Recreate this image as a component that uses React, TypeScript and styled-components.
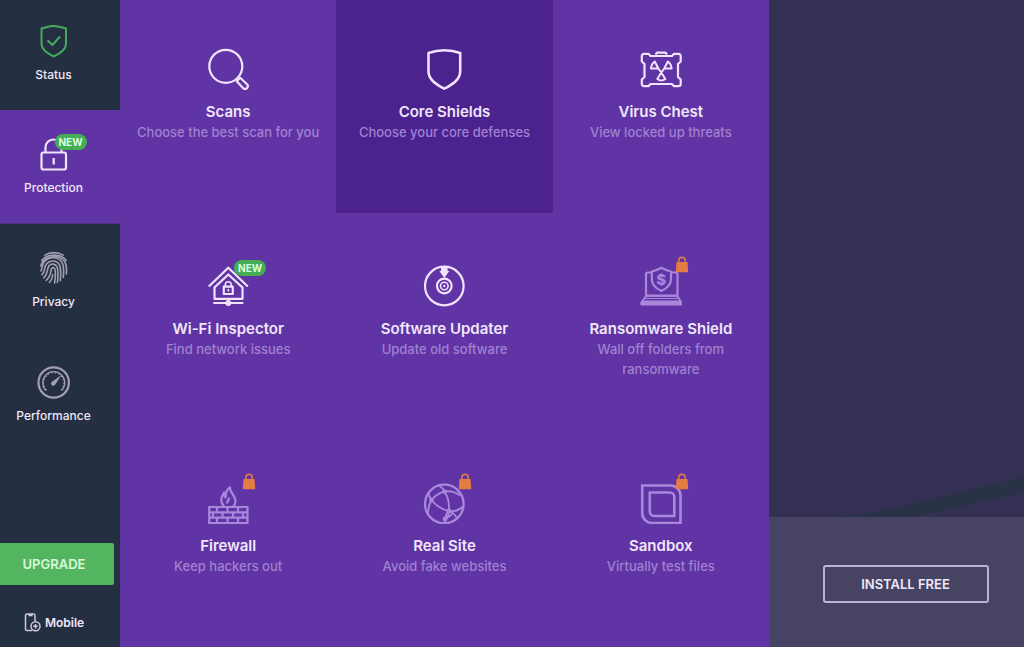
import React from "react";
import styled, { createGlobalStyle } from "styled-components";

const GlobalStyle = createGlobalStyle`
  * { box-sizing: border-box; }
  body {
    margin: 0;
    background: #243041;
    color: #f0e6fa;
    font-family: Inter, "Open Sans", sans-serif;
  }
  a { color: inherit; text-decoration: none; }
  svg { display: block; }
`;

const Shell = styled.div`
  display: grid;
  grid-template-columns: 120px minmax(0, 649fr) minmax(0, 255fr);
  min-height: 100vh;
`;

const Sidebar = styled.nav`
  display: flex;
  flex-direction: column;
  background: #243041;
`;

const NavItem = styled.a<{ $active?: boolean }>`
  display: flex;
  flex-direction: column;
  align-items: center;
  gap: 8px;
  height: 114px;
  padding: 27px 13px 0 0;
  border-bottom: 1px solid ${(p) => (p.$active ? "#4a2f80" : "#212c3c")};
  background: ${(p) => (p.$active ? "#6034a4" : "transparent")};
  font-size: 12px;
  font-weight: 500;
  line-height: 18px;

  &:first-child {
    height: 110px;
    padding-top: 24px;
  }
`;

const NavIcon = styled.span<{ $color: string }>`
  position: relative;
  display: grid;
  place-items: center;
  width: 34px;
  height: 34px;
  color: ${(p) => p.$color};
`;

const SidebarFooter = styled.div`
  display: flex;
  flex-direction: column;
  gap: 13px;
  margin-top: auto;
`;

const UpgradeButton = styled.button`
  width: 114px;
  height: 42px;
  padding: 0 6px 0 0;
  border: 0;
  border-radius: 0 2px 2px 0;
  background: #53b560;
  color: #d8fbdc;
  font: inherit;
  font-size: 13px;
  font-weight: 600;
`;

const MobileLink = styled.a`
  display: flex;
  align-items: center;
  justify-content: center;
  gap: 4px;
  height: 49px;
  padding-right: 12px;
  font-size: 12px;
  font-weight: 600;
`;

const NewBadge = styled.span<{ $x: number; $y: number }>`
  position: absolute;
  left: ${(p) => p.$x}px;
  top: ${(p) => p.$y}px;
  width: 32px;
  height: 16px;
  border-radius: 8px;
  background: #43ae54;
  color: #dcffe0;
  font-size: 10px;
  font-weight: 700;
  line-height: 16px;
  text-align: center;
`;

const LockBadge = styled.span`
  position: absolute;
  left: 35px;
  top: -9px;
`;

const Tools = styled.main`
  display: grid;
  grid-template-columns: repeat(3, minmax(0, 1fr));
  grid-template-rows: repeat(3, minmax(180px, 1fr));
  row-gap: 4px;
  background: #6034a4;
`;

const Tile = styled.a<{ $selected?: boolean }>`
  display: flex;
  flex-direction: column;
  align-items: center;
  padding: 48px 8px 0;
  background: ${(p) => (p.$selected ? "#4c228f" : "transparent")};
  text-align: center;
`;

const TileIcon = styled.span<{ $locked?: boolean }>`
  position: relative;
  width: 42px;
  height: 42px;
  color: ${(p) => (p.$locked ? "#a987db" : "#f0e3fb")};
`;

const TileTitle = styled.strong`
  margin-top: 11px;
  font-size: 15px;
  font-weight: 600;
  line-height: 21px;
`;

const TileText = styled.span<{ $narrow?: boolean }>`
  max-width: ${(p) => (p.$narrow ? "150px" : "none")};
  color: #a081d2;
  font-size: 13px;
  font-weight: 500;
  line-height: 20px;
`;

const Aside = styled.aside`
  display: flex;
  flex-direction: column;
  background: #343053;
`;

const Backdrop = styled.div`
  display: flex;
  flex: 1;
  align-items: flex-end;

  svg { width: 100%; height: 48px; }
`;

const InstallPanel = styled.div`
  display: flex;
  align-items: center;
  justify-content: center;
  height: 130px;
  padding: 4px 0 0 18px;
  background: #464363;
`;

const InstallButton = styled.button`
  width: 166px;
  height: 38px;
  border: 2px solid #bdb2d2;
  border-radius: 3px;
  background: transparent;
  color: #f0e6fa;
  font: inherit;
  font-size: 13px;
  font-weight: 600;
`;

const Drawing = ({ size = 42, children }: { size?: number; children: React.ReactNode }) => (
  <svg
    width={size}
    height={size}
    viewBox={`0 0 ${size} ${size}`}
    fill="none"
    stroke="currentColor"
    strokeWidth="2.2"
    strokeLinejoin="round"
    aria-hidden="true"
  >
    {children}
  </svg>
);

const StatusIcon = () => (
  <Drawing size={34}>
    <path d="M4.500 4.500C9 3.500 12 2 16.700 2s8 1.500 12.300 2.500V20c0 6-6 9.500-12.300 12.500C10.500 29.500 4.500 26 4.500 20z" strokeWidth="2" />
    <path d="M10.500 16.500l5 4.500 7.500-8.500" strokeWidth="2" />
  </Drawing>
);

const PadlockIcon = () => (
  <Drawing size={34}>
    <rect x="4.500" y="15.500" width="24.500" height="17" rx="2" />
    <path d="M8.500 15V10.500a8 8 0 0 1 16 0V15M16.700 21v6.500" />
  </Drawing>
);

const FingerprintIcon = () => (
  <Drawing size={34}>
    <g strokeWidth="1.600" strokeLinecap="round">
      <path d="M8 4.200C13 .8 21 .8 26 4.200" />
      <path d="M4.800 9.500C10 2.300 24 2.300 29.200 9.500" />
      <path d="M3.800 15C6.500 3.800 24 2.500 28.300 12c1.500 3.500 1.500 7.500 1 11" />
      <path d="M4 20c1.500-3 .5-6 3.500-9.500 5-5.800 15-4.800 18 2 1.600 4 1.300 9 .8 14" />
      <path d="M5 23.800c3.500-3.500 1.500-7 4.700-11 3.800-4.500 11-3.500 13 1.800 1.800 5 1 10 .6 15" />
      <path d="M6.800 26.800c5-4.500 2.600-8.500 5.200-12 2.500-3 7-2 8.200 1.500 1.500 4.800.8 10 .2 15" />
      <path d="M9.200 29.300c5.800-5 3.800-9.300 5.500-11.800 1.200-1.500 2.800-.8 3.200.8 1.200 4.500.3 9-.3 13.700" />
      <path d="M12.500 31.500c2-2.300 3-5 3.300-8" />
    </g>
  </Drawing>
);

const GaugeIcon = () => (
  <Drawing size={34}>
    <circle cx="16.700" cy="17.500" r="15.200" />
    <path d="M9 25.500a11 11 0 1 1 15.500 0" strokeWidth="1.300" />
    <path d="M9.500 25a10.200 10.200 0 1 1 14.500 0" strokeWidth="1.500" strokeDasharray="1 2.600" />
    <path d="M23.500 11L18 19.500a2 2 0 1 1-2.600-2.800z" fill="currentColor" strokeWidth=".5" />
  </Drawing>
);

const MobileIcon = () => (
  <svg width="17" height="19" viewBox="0 0 17 19" fill="none" stroke="#cfc6dc" strokeWidth="1.500" aria-hidden="true">
    <path d="M8 17.500H3A1.500 1.500 0 0 1 1.500 16V2.500A1.500 1.500 0 0 1 3 1h6.500A1.500 1.500 0 0 1 11 2.500V8M4.500 2.500h4" />
    <circle cx="11.500" cy="13.300" r="4.500" />
    <path d="M11.500 11v4.600M9.200 13.300h4.600" />
  </svg>
);

const OrangeLock = () => (
  <svg width="14" height="17" viewBox="0 0 14 17" fill="none" role="img" aria-label="Locked">
    <path d="M3.800 7V4.600a3.200 3.200 0 0 1 6.400 0V7" stroke="#dd7b48" strokeWidth="1.600" />
    <path d="M1.500 6h11l.7 9.300a.8.800 0 0 1-.8.900H1.600a.8.800 0 0 1-.8-.9z" fill="#e27c42" />
  </svg>
);

const ScanIcon = () => (
  <Drawing>
    <circle cx="18.800" cy="18.300" r="16.500" />
    <path d="M29.800 33.200l6.200 6.800a2.700 2.700 0 0 0 4-3.700l-6.800-6.500z" />
  </Drawing>
);

const ShieldIcon = () => (
  <Drawing>
    <path d="M5.500 5C11 3 16 2.200 21.300 2.200S32 3 37.200 5v18.500c0 8-7.500 12.800-15.900 17.200C13 36.300 5.500 31.500 5.500 23.500z" strokeWidth="2.600" />
  </Drawing>
);

const ChestIcon = () => (
  <Drawing>
    <path d="M15.500 6.500l1.500-1.800h8.600L27 6.500M10.500 8h21.500l2-2.200h4.500a2.200 2.200 0 0 1 2.200 2.200v5.500L38 16v13l2.700 2.500V36a2.200 2.200 0 0 1-2.200 2.200H34L32 36H10.500l-2 2.200H4A2.200 2.200 0 0 1 1.800 36v-4.500L4.500 29V16l-2.700-2.500V8A2.200 2.200 0 0 1 4 5.800h4.500z" />
    <path d="M14.800 13.500q-3.500 2.500-3.800 7h7.300zM27.800 13.500q3.500 2.500 3.800 7h-7.300zM21.300 24.500l-4 6.500q4 2.800 8 0zM18.300 20.500l3 4 3-4" strokeWidth="2" />
  </Drawing>
);

const HouseIcon = () => (
  <Drawing>
    <path d="M1.800 21.500L21.300 2.700l19.500 18.800" />
    <path d="M7.500 22.500v11.300h28V22.500L21.300 9.500z" />
    <rect x="16.800" y="21.700" width="9" height="7.300" />
    <path d="M18.300 21.500v-1.800a3 3 0 0 1 6 0v1.800M21.300 24v2.500" strokeWidth="1.600" />
    <path d="M6.300 38h30M21.300 34v3" strokeWidth="2" />
    <circle cx="21.300" cy="38" r="2.900" fill="currentColor" stroke="none" />
  </Drawing>
);

const UpdaterIcon = () => (
  <Drawing>
    <circle cx="21.300" cy="21" r="19.300" />
    <circle cx="21.300" cy="21" r="7.300" />
    <circle cx="21.300" cy="21" r="3.800" strokeWidth="1.600" />
    <circle cx="21.300" cy="21" r="1.200" fill="currentColor" stroke="none" />
    <path d="M18 2h6.600v4h1.700l-5 7-5-7H18z" fill="currentColor" stroke="none" />
  </Drawing>
);

const RansomwareIcon = () => (
  <Drawing>
    <path d="M12 7.500H8A2 2 0 0 0 6 9.500v21h31.500v-21a2 2 0 0 0-2-2h-4" />
    <path d="M6 31l-4 5.500h38.700L37.500 31z" strokeWidth="1.800" />
    <path d="M4 33.500h35" strokeWidth="1.200" />
    <path d="M2 38.500h38.700" strokeWidth="4" strokeLinecap="round" />
    <path d="M11.800 6.500q5-1 9.500-3.700Q26 5.500 31 6.500V14c0 6-4 9.500-9.700 12-5.300-2.500-9.500-6-9.500-12z" fill="#6034a4" />
    <text x="21.300" y="19.500" fill="currentColor" stroke="none" fontSize="15" fontWeight="800" textAnchor="middle">$</text>
  </Drawing>
);

const FirewallIcon = () => (
  <Drawing>
    <path d="M17 24.500c-5-5.500-2-10.500 0-14 0 3 .5 4 1.500 5 0-4 1-8 4.500-10-.5 5 5.500 8 5.500 13.500 0 2.500-.7 4-2.500 5.500M20 21.500c0-2.500 2-3 2-6" />
    <rect x="2.200" y="25" width="38.300" height="16" />
    <path d="M2.200 30.300h38.300M2.200 35.700h38.300M10 25v5.300M20.500 25v5.300M31 25v5.300M6 30.300v5.400M15.500 30.300v5.400M26 30.300v5.400M36 30.300v5.400M10 35.700V41M20.500 35.700V41M31 35.700V41" />
  </Drawing>
);

const GlobeIcon = () => (
  <Drawing>
    <circle cx="21.300" cy="22" r="19.300" />
    <g strokeWidth="1.900">
      <path d="M16 3.500C18.500 5 20.500 7 21.500 9.500 25 15 26.500 22 26 29c-.3 4-1.800 8-5 12" />
      <path d="M5.500 11.500C6 14 7 16 8.500 18c4 5 10 9.500 17.500 11 5 .8 10-.8 14-4.500" />
      <path d="M5 32c0-5 1-9.500 3.500-14 3-4 7.500-7 13-8.500 6-1 11 .5 15.500 4" />
      <path d="M34 36.500c-1-3-4-5.500-8-7.500M26 29c-2 1.500-3.500 4-3.500 7.500 3-1 6-3.500 8-6" />
    </g>
    <g fill="currentColor" stroke="none">
      <circle cx="21.500" cy="9.500" r="2.300" />
      <circle cx="8.500" cy="18" r="2.300" />
      <circle cx="26" cy="29" r="2.500" />
      <circle cx="22" cy="37" r="2.300" />
    </g>
  </Drawing>
);

const SandboxIcon = () => (
  <Drawing>
    <path d="M2.200 3.500h28.300a10 10 0 0 1 10 10v27.500h-28.300a10 10 0 0 1-10-10z" strokeWidth="2.600" strokeLinejoin="miter" />
    <path d="M9.800 10.500h20a4.500 4.500 0 0 1 4.500 4.500v19h-20a4.500 4.500 0 0 1-4.500-4.500z" strokeWidth="2.600" strokeLinejoin="miter" />
  </Drawing>
);

type Tool = {
  title: string;
  text: string;
  icon: React.ReactNode;
  selected?: boolean;
  isNew?: boolean;
  locked?: boolean;
};

const tools: Tool[] = [
  { title: "Scans", text: "Choose the best scan for you", icon: <ScanIcon /> },
  { title: "Core Shields", text: "Choose your core defenses", icon: <ShieldIcon />, selected: true },
  { title: "Virus Chest", text: "View locked up threats", icon: <ChestIcon /> },
  { title: "Wi-Fi Inspector", text: "Find network issues", icon: <HouseIcon />, isNew: true },
  { title: "Software Updater", text: "Update old software", icon: <UpdaterIcon /> },
  { title: "Ransomware Shield", text: "Wall off folders from ransomware", icon: <RansomwareIcon />, locked: true },
  { title: "Firewall", text: "Keep hackers out", icon: <FirewallIcon />, locked: true },
  { title: "Real Site", text: "Avoid fake websites", icon: <GlobeIcon />, locked: true },
  { title: "Sandbox", text: "Virtually test files", icon: <SandboxIcon />, locked: true },
];

export default function App() {
  return (
    <>
      <GlobalStyle />
      <Shell>
        <Sidebar>
          <NavItem href="#status">
            <NavIcon $color="#45ab5c"><StatusIcon /></NavIcon>
            Status
          </NavItem>
          <NavItem href="#protection" $active>
            <NavIcon $color="#f0e3fb">
              <PadlockIcon />
              <NewBadge $x={18} $y={-3}>NEW</NewBadge>
            </NavIcon>
            Protection
          </NavItem>
          <NavItem href="#privacy">
            <NavIcon $color="#a39fb3"><FingerprintIcon /></NavIcon>
            Privacy
          </NavItem>
          <NavItem href="#performance">
            <NavIcon $color="#a39fb3"><GaugeIcon /></NavIcon>
            Performance
          </NavItem>
          <SidebarFooter>
            <UpgradeButton>UPGRADE</UpgradeButton>
            <MobileLink href="#mobile"><MobileIcon />Mobile</MobileLink>
          </SidebarFooter>
        </Sidebar>
        <Tools>
          {tools.map((tool) => (
            <Tile key={tool.title} href="#" $selected={tool.selected}>
              <TileIcon $locked={tool.locked}>
                {tool.icon}
                {tool.isNew && <NewBadge $x={27} $y={-5}>NEW</NewBadge>}
                {tool.locked && <LockBadge><OrangeLock /></LockBadge>}
              </TileIcon>
              <TileTitle>{tool.title}</TileTitle>
              <TileText $narrow={tool.title === "Ransomware Shield"}>{tool.text}</TileText>
            </Tile>
          ))}
        </Tools>
        <Aside>
          <Backdrop>
            <svg viewBox="0 0 255 48" preserveAspectRatio="none" aria-hidden="true">
              <path d="M70 48C130 42 190 22 255 8v16C220 30 180 40 145 48z" fill="#2a3247" />
            </svg>
          </Backdrop>
          <InstallPanel>
            <InstallButton>INSTALL FREE</InstallButton>
          </InstallPanel>
        </Aside>
      </Shell>
    </>
  );
}
